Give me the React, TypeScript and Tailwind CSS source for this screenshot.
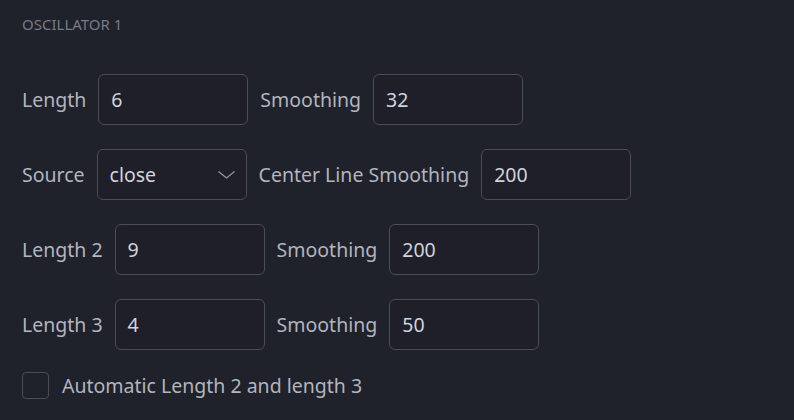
const font = { fontFamily: '"Noto Sans", "DejaVu Sans", sans-serif' };

function Field({ value, select = false }: { value: string; select?: boolean }) {
  return (
    <div className="flex h-[51px] w-[150px] items-center justify-between rounded-[6px] border border-[#4a4c56] bg-[#1e1f29] pl-[12px] pr-[11px] text-[19.5px] text-[#d1d4dc]">
      <span>{value}</span>
      {select && (
        <svg width="17" height="8" viewBox="0 0 17 8" fill="none" stroke="#9598a1" strokeWidth="1.2">
          <path d="M0.5 0.5 L8.5 7 L16.5 0.5" />
        </svg>
      )}
    </div>
  );
}

function Row({ items }: { items: { label: string; value: string; select?: boolean }[] }) {
  return (
    <div className="flex h-[51px] items-center gap-[12px]">
      {items.map((it) => (
        <div key={it.label} className="contents">
          <span className="text-[19.5px] text-[#b2b5be]">{it.label}</span>
          <Field value={it.value} select={it.select} />
        </div>
      ))}
    </div>
  );
}

export default function App() {
  return (
    <div className="h-[420px] w-[794px] bg-[#1f212b] px-[22px] pt-[14px]" style={font}>
      <div className="text-[15px] leading-[20px] text-[#787b86]">OSCILLATOR 1</div>
      <div className="mt-[40px] flex flex-col gap-[24px]">
        <Row items={[{ label: 'Length', value: '6' }, { label: 'Smoothing', value: '32' }]} />
        <Row items={[{ label: 'Source', value: 'close', select: true }, { label: 'Center Line Smoothing', value: '200' }]} />
        <Row items={[{ label: 'Length 2', value: '9' }, { label: 'Smoothing', value: '200' }]} />
        <Row items={[{ label: 'Length 3', value: '4' }, { label: 'Smoothing', value: '50' }]} />
      </div>
      <label className="mt-[22px] flex h-[27px] items-center gap-[13px]">
        <span className="h-[27px] w-[27px] rounded-[4px] border border-[#4a4c56]" />
        <span className="text-[19.5px] text-[#b2b5be]">Automatic Length 2 and length 3</span>
      </label>
    </div>
  );
}
